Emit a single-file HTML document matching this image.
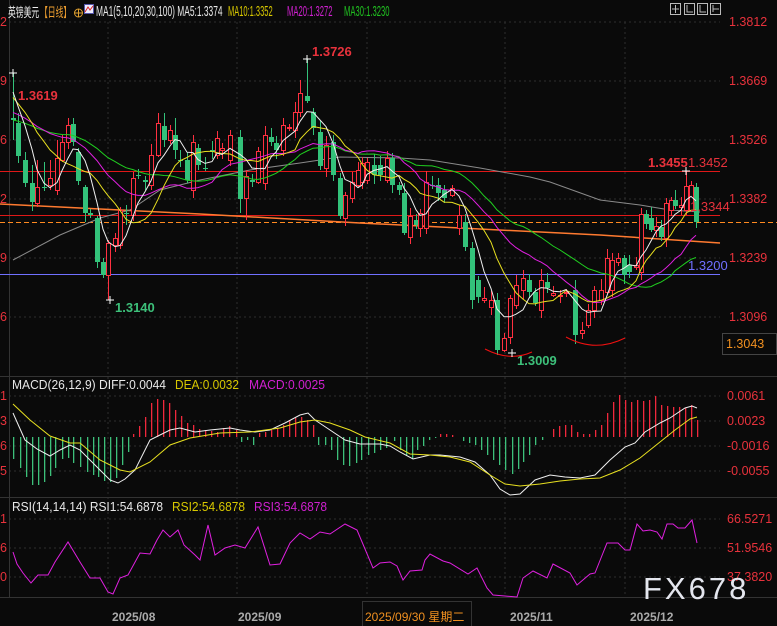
<!DOCTYPE html>
<html><head><meta charset="utf-8">
<style>
*{margin:0;padding:0}
body{width:777px;height:626px;background:#0a0a0a;overflow:hidden;position:relative;font-family:"Liberation Sans","Noto Sans CJK SC",sans-serif}
.t{position:absolute;white-space:nowrap;font-size:13px;line-height:14px}
.h{position:absolute;top:4px;white-space:nowrap;font-size:15px;line-height:16px;transform-origin:0 0}
.r{position:absolute;font-size:12.5px;color:#e8323c;white-space:nowrap}
svg{position:absolute;left:0;top:0}
svg text{font-family:"Liberation Sans","Noto Sans CJK SC",sans-serif}
</style></head><body>
<svg id="s" width="777" height="626" xmlns="http://www.w3.org/2000/svg">
<g stroke="#2e2e2e" stroke-dasharray="2,3" stroke-width="1">
<line x1="9" y1="22" x2="720" y2="22"/><line x1="9" y1="81" x2="720" y2="81"/><line x1="9" y1="140" x2="720" y2="140"/><line x1="9" y1="199" x2="720" y2="199"/><line x1="9" y1="258" x2="720" y2="258"/><line x1="9" y1="317" x2="720" y2="317"/>
<line x1="9" y1="396" x2="720" y2="396"/><line x1="9" y1="421" x2="720" y2="421"/><line x1="9" y1="446" x2="720" y2="446"/><line x1="9" y1="471" x2="720" y2="471"/>
<line x1="9" y1="519" x2="720" y2="519"/><line x1="9" y1="548" x2="720" y2="548"/><line x1="9" y1="577" x2="720" y2="577"/>
<line x1="108" y1="22" x2="108" y2="597"/><line x1="237" y1="22" x2="237" y2="597"/><line x1="367" y1="22" x2="367" y2="597"/><line x1="505" y1="22" x2="505" y2="597"/><line x1="625" y1="22" x2="625" y2="597"/>
</g>
<g stroke="#333" stroke-width="1"><line x1="0" y1="376.5" x2="777" y2="376.5"/><line x1="0" y1="497.5" x2="777" y2="497.5"/><line x1="0" y1="597.5" x2="777" y2="597.5"/><line x1="9.5" y1="0" x2="9.5" y2="597"/></g>
<line x1="0" y1="171.5" x2="720" y2="171.5" stroke="#e01818"/>
<line x1="0" y1="215.5" x2="720" y2="215.5" stroke="#e01818"/>
<line x1="0" y1="222.5" x2="777" y2="222.5" stroke="#ff8a20" stroke-dasharray="5,3"/>
<polyline points="0,204 120,210 200,214 360,223 480,229 600,235 720,243" fill="none" stroke="#ff7a30" stroke-width="1.5"/>
<line x1="0" y1="274.5" x2="720" y2="274.5" stroke="#7070ff"/>
<polyline points="13,260 60,235 100,218 130,210 160,190 200,180 250,170 300,163 340,157 400,158 430,160 480,168 530,177 550,182 600,200 640,205 670,210 700,212" fill="none" stroke="#8a8a8a"/>
<g id="cand"></g><g id="ma"></g><g id="hist"></g>
<path d="M485,349 Q510,362 532,352" fill="none" stroke="#f01010"/>
<path d="M566,337 Q595,353 625,338" fill="none" stroke="#f01010"/>
<g stroke="#fff"><path d="M9,73H17M13,69V77"/><path d="M303,59H311M307,55V63"/><path d="M106,300H114M110,296V304"/><path d="M508,353H516M512,349V357"/><path d="M682,171H690M686,167V175"/></g>
<polyline fill="none" stroke="#f0f0f0" points="13,413 25,440 37,449 50,456 60,450 70,445 80,450 100,470 110,480 118,483 125,479 135,470 150,440 160,435 170,430 180,428 195,432 210,430 230,428 240,430 255,432 270,430 285,423 300,415 308,413 315,420 330,430 345,440 360,444 380,444 390,446 400,452 413,459 430,455 440,455 460,457 475,462 490,475 500,489 510,495 520,494 535,480 550,475 565,477 580,478 595,475 610,460 625,447 635,443 645,432 660,423 670,418 685,408 692,406 697,408"/>
<polyline fill="none" stroke="#e8e020" points="13,404 30,420 50,436 70,443 80,443 100,460 120,470 130,472 150,462 170,445 190,438 220,433 250,432 280,428 300,422 315,420 330,423 350,430 365,437 390,443 410,454 430,455 450,457 470,462 490,475 505,484 520,486 540,484 560,481 580,479 600,478 620,470 640,458 660,442 675,430 690,419 697,417"/>
<polyline fill="none" stroke="#e020e0" points="13,552 17,564 23,573 31,583 38,575 48,575 55,562 68,542 80,562 90,578 100,578 108,592 113,594 120,578 128,575 140,553 150,554 157,540 163,530 170,537 178,530 184,545 195,555 200,560 208,525 215,555 225,548 235,545 245,548 258,527 270,565 280,564 290,543 300,533 310,539 320,532 330,534 345,524 357,530 373,568 380,563 390,562 397,566 403,580 410,571 422,570 425,560 430,554 443,561 450,563 468,574 477,568 487,588 493,595 505,596 517,597 523,578 533,571 547,578 553,564 570,573 577,585 590,574 595,573 607,543 618,543 625,550 630,550 637,524 643,531 650,530 657,532 662,539 667,524 673,524 678,528 685,528 692,520 697,543"/>
<rect x="722.5" y="333.5" width="54" height="21" fill="#0a0a0a" stroke="#444"/>
<g fill="none" stroke="#bbb"><rect x="670.5" y="3.5" width="10" height="11"/><rect x="684.5" y="3.5" width="10" height="11"/><rect x="697.5" y="3.5" width="10" height="11"/><rect x="710.5" y="3.5" width="10" height="11"/>
<path d="M675.5,5V13M672,9H679M687,5V12H693M700,5V12H706M713,5V12M713,9H719"/></g>
<rect x="84.5" y="4.5" width="9" height="9" fill="#eef" stroke="#55a"/><path d="M85,12 L88,7 L90,10 L93,6" stroke="#d22" fill="none"/>
<circle cx="78.5" cy="13" r="4" fill="none" stroke="#e0a030"/><path d="M74.5,13H82.5M78.5,9V17" stroke="#e0a030"/>
<text x="12" y="389" fill="#e8e8e8" font-size="13" textLength="154" lengthAdjust="spacingAndGlyphs">MACD(26,12,9) DIFF:0.0044</text>
<text x="175" y="389" fill="#d8c800" font-size="13" textLength="64" lengthAdjust="spacingAndGlyphs">DEA:0.0032</text>
<text x="249" y="389" fill="#d020d0" font-size="13" textLength="76" lengthAdjust="spacingAndGlyphs">MACD:0.0025</text>
<text x="12" y="511" fill="#e8e8e8" font-size="13" textLength="151" lengthAdjust="spacingAndGlyphs">RSI(14,14,14) RSI1:54.6878</text>
<text x="172" y="511" fill="#d8c800" font-size="13" textLength="73" lengthAdjust="spacingAndGlyphs">RSI2:54.6878</text>
<text x="254" y="511" fill="#d020d0" font-size="13" textLength="73" lengthAdjust="spacingAndGlyphs">RSI3:54.6878</text>
</svg>
<div class="h" style="left:8px;color:#eee;font-size:13px;top:5px;transform:scaleX(0.6)">英镑美元</div>
<div class="h" style="left:40px;color:#f0a030;font-size:13px;top:5px;transform:scaleX(0.6)">【日线】</div>
<div class="h" style="left:96px;color:#e8e8e8;transform:scaleX(0.56)">MA1(5,10,20,30,100) MA5:1.3374</div>
<div class="h" style="left:228px;color:#d8c800;transform:scaleX(0.5)">MA10:1.3352</div>
<div class="h" style="left:287px;color:#d020d0;transform:scaleX(0.51)">MA20:1.3272</div>
<div class="h" style="left:344px;color:#20c020;transform:scaleX(0.51)">MA30:1.3230</div>
<div class="r" style="left:0;top:15px">2</div><div class="r" style="left:0;top:74px">9</div><div class="r" style="left:0;top:133px">6</div><div class="r" style="left:0;top:192px">2</div><div class="r" style="left:0;top:251px">9</div><div class="r" style="left:0;top:310px">6</div>
<div class="r" style="left:0;top:389px">1</div><div class="r" style="left:0;top:414px">3</div><div class="r" style="left:0;top:439px">6</div><div class="r" style="left:0;top:464px">5</div>
<div class="r" style="left:0;top:512px">1</div><div class="r" style="left:0;top:541px">6</div><div class="r" style="left:0;top:570px">0</div>
<div class="r" style="left:729px;top:15px">1.3812</div><div class="r" style="left:729px;top:74px">1.3669</div><div class="r" style="left:729px;top:133px">1.3526</div><div class="r" style="left:729px;top:192px">1.3382</div><div class="r" style="left:729px;top:251px">1.3239</div><div class="r" style="left:729px;top:310px">1.3096</div>
<div class="r" style="left:726px;top:337px;color:#f09020">1.3043</div>
<div class="r" style="left:727px;top:389px">0.0061</div><div class="r" style="left:727px;top:414px">0.0023</div><div class="r" style="left:727px;top:439px">-0.0016</div><div class="r" style="left:727px;top:464px">-0.0055</div>
<div class="r" style="left:727px;top:512px">66.5271</div><div class="r" style="left:727px;top:541px">51.9546</div><div class="r" style="left:727px;top:570px">37.3820</div>
<div class="r" style="left:18px;top:88px;font-weight:bold;font-size:13px">1.3619</div>
<div class="r" style="left:312px;top:44px;font-weight:bold;font-size:13px">1.3726</div>
<div class="r" style="left:115px;top:300px;font-weight:bold;font-size:13px;color:#3dc07a">1.3140</div>
<div class="r" style="left:517px;top:353px;font-weight:bold;font-size:13px;color:#3dc07a">1.3009</div>
<div class="r" style="left:648px;top:155px;font-weight:bold;font-size:13px">1.3455</div>
<div class="r" style="left:688px;top:155px;font-size:13px">1.3452</div>
<div class="r" style="left:690px;top:199px;font-size:13px">1.3344</div>
<div class="r" style="left:688px;top:258px;font-size:13px;color:#7070ff">1.3200</div>
<div style="position:absolute;left:643px;top:571px;font-size:31px;color:#e4e6ee;letter-spacing:3px;font-family:'Liberation Sans',sans-serif">FX678</div>
<div class="t" style="left:112px;top:610px;color:#aaa;font-weight:bold;font-size:12px">2025/08</div>
<div class="t" style="left:238px;top:610px;color:#aaa;font-weight:bold;font-size:12px">2025/09</div>
<div style="position:absolute;left:362px;top:601px;width:110px;height:25px;border:1px solid #333;border-bottom:none;box-sizing:border-box"></div>
<div class="t" style="left:365px;top:610px;color:#f09020;font-size:12px">2025/09/30 星期二</div>
<div class="t" style="left:510px;top:610px;color:#aaa;font-weight:bold;font-size:12px">2025/11</div>
<div class="t" style="left:630px;top:610px;color:#aaa;font-weight:bold;font-size:12px">2025/12</div>
<script>
var C=[[13,118,120,73,140],[18,123,156],[25,160,183],[32,183,202,165],[37,203,187,160,207],[44,187,188,162],[50,185,178,160,190],[57,190,158,140],[62,160,142,135],[68,142,125,118],[73,124,142,118],[78,152,181,148,185],[85,187,213,185,222],[90,213,215],[97,218,262,216,268],[103,262,275,258,278],[108,275,243,240,300],[115,245,238],[120,245,210],[126,213,213,205,225],[133,215,178,172],[138,175,176],[145,180,182],[151,185,155],[158,155,123,113],[164,126,140,113],[170,140,130],[175,135,150,118],[180,160,161],[187,160,180],[193,190,142,135],[198,148,165],[205,168,169],[212,150,152],[217,155,138],[222,150,148],[230,160,135,130],[240,137,199,130,213],[246,198,176,170,220],[252,180,182],[258,182,151],[265,183,135,126],[271,137,142],[276,143,150],[283,150,125,118],[289,128,127],[295,130,112],[300,112,93,80],[307,96,101,59],[313,112,128],[320,132,166],[326,168,145],[333,142,175],[340,178,216],[345,218,195],[352,198,182],[358,185,170],[362,182,163],[367,180,162],[374,165,175],[380,165,175],[387,180,158],[392,158,185],[399,185,190],[404,193,233],[410,237,216],[416,220,225],[420,228,213],[426,228,182],[432,185,186],[438,185,193],[444,190,198],[452,195,188],[459,228,215],[465,222,247],[472,248,300],[478,280,297],[484,300,298],[491,307,300],[497,300,350],[504,350,338],[510,337,298],[516,305,285],[523,290,278],[529,280,292],[535,292,303],[541,310,280],[547,282,288],[553,295,293],[560,296,295],[566,293,292],[575,290,335],[582,333,330],[588,325,310],[594,310,290],[601,300,290],[607,292,258],[612,290,260],[618,262,258],[624,258,275],[629,265,272],[636,267,265],[641,272,214],[646,214,224],[651,218,230],[656,230,226],[661,227,237],[666,238,203],[671,210,200],[675,200,206],[681,207,205],[686,210,186,171],[691,210,185],[696,187,222,183,228]];
var s="";
C.forEach(function(c,i){var x=c[0],o=c[1],cl=c[2],t=Math.min(o,cl),b=Math.max(o,cl);var h=c[3]||t-(3+(i*7)%9),l=c[4]||b+(2+(i*5)%8);var up=cl<o;var col=up?"#ff3040":"#33c27a";
s+='<line x1="'+(x+.5)+'" y1="'+h+'" x2="'+(x+.5)+'" y2="'+l+'" stroke="'+col+'"/>';
var hh=Math.max(b-t,1);
if(up)s+='<rect x="'+(x-1.5)+'" y="'+(t+.5)+'" width="4" height="'+hh+'" fill="#0a0a0a" stroke="'+col+'"/>';
else s+='<rect x="'+(x-2)+'" y="'+t+'" width="5" height="'+hh+'" fill="'+col+'"/>';});
document.getElementById("cand").innerHTML=s;
var cl=C.map(function(c){return c[2]});
function ma(n,pad){var a=[],arr=[];for(var i=0;i<n;i++)arr.push(pad);arr=arr.concat(cl);for(var i=n;i<arr.length;i++){var sm=0;for(var j=i-n+1;j<=i;j++)sm+=arr[j];a.push(sm/n)}return a}
function pl(a,col){return '<polyline fill="none" stroke="'+col+'" points="'+a.map(function(v,i){return C[i][0]+','+v.toFixed(1)}).join(' ')+'"/>'}
document.getElementById("ma").innerHTML=pl(ma(30,120),"#20d020")+pl(ma(20,112),"#e020e0")+pl(ma(10,95),"#e8e020")+pl(ma(5,85),"#f0f0f0");
var H={13:459,20:468,26:477,32:485,38:485,44:482,50:476,55:468,62:459,68:458,73:463,80:467,87:472,93:475,98:477,104:481,110:482,116:478,122:465,128:452,133:434,139:426,145:417,151:403,157:399,163:400,169:403,175:410,181:416,187:423,193:425,199:429,205:430,211:431,217:432,223:428,229:426,236:430,241:442,247:440,253:445,259:433,265:432,271:430,277:428,283:425,289:420,295:418,301:417,307:420,313:425,318:445,325:445,331:450,337:460,343:465,349:466,356:463,361:460,368:455,374:453,380:450,386:448,394:441,400:450,406:456,412:459,417:450,423:446,429:440,435:438,440:434,446:434,452:435,463:441,469:443,475:445,481:450,487:455,493:460,499:465,505:470,512:474,518:469,523:462,529:455,535:445,542:440,553:429,559:426,565:425,571:425,577:432,583:434,589:434,595:430,601:425,607:413,613:402,619:395,625:400,631:402,637:400,643:401,649:400,655:396,661:405,667:406,673:407,679:407,685:408,691:405,697:420};
var z=437,hs="";for(var k in H){var y=H[k];hs+='<rect x="'+(+k)+'" y="'+Math.min(y,z)+'" width="1.3" height="'+Math.abs(z-y)+'" fill="'+(y<z?"#f0283c":"#3dc07a")+'"/>';}
document.getElementById("hist").innerHTML=hs;
</script>
</body></html>
